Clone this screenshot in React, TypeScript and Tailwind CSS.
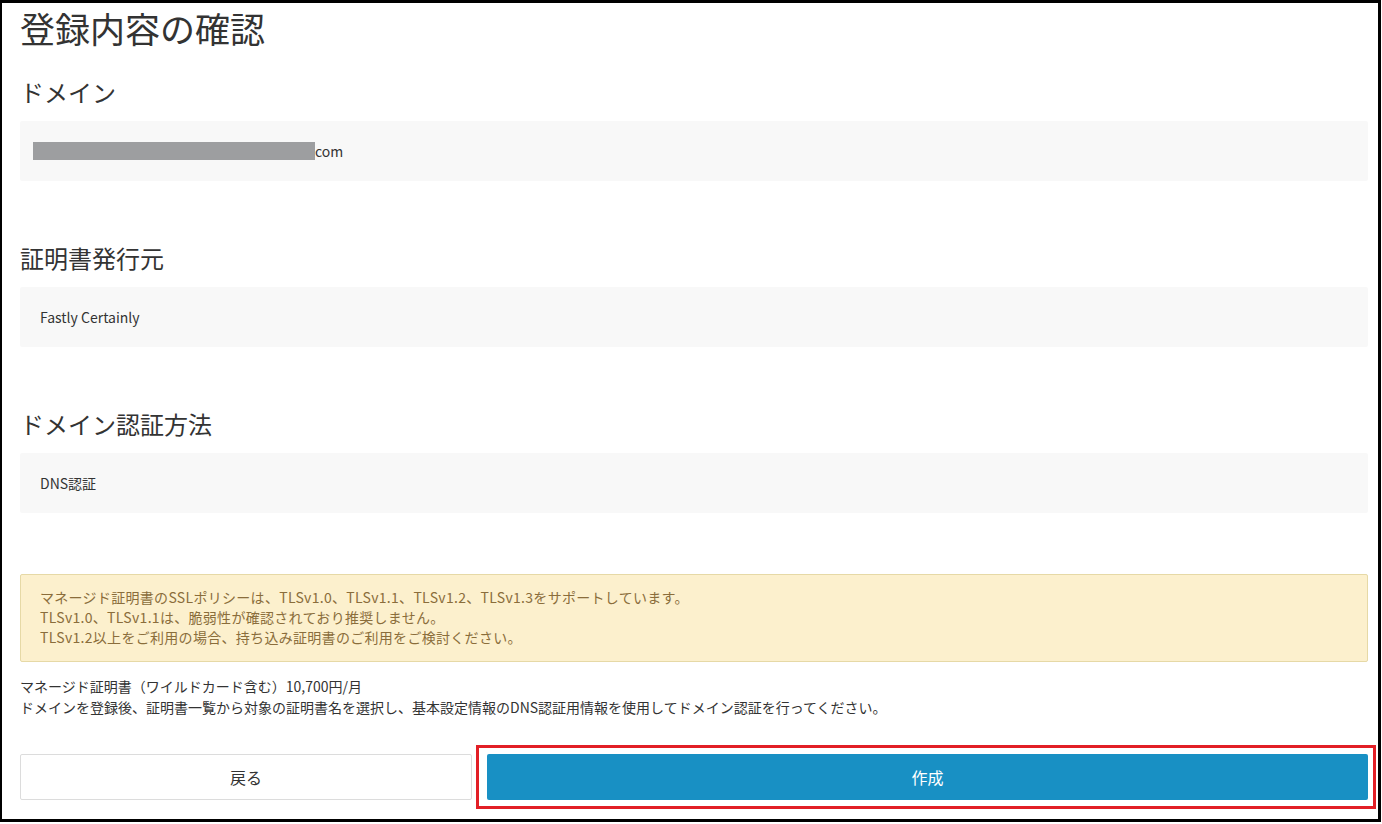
const font = { fontFamily: '"Noto Sans CJK JP", "Noto Sans", sans-serif' };

function Section({ title, children }: { title: string; children: React.ReactNode }) {
  return (
    <>
      <h2 className="text-[24px] leading-[36px] text-[#333]">{title}</h2>
      <div className="mt-[11px] flex h-[60px] items-center rounded-[2px] bg-[#f8f8f8] px-[20px] text-[14px] text-[#333]">
        {children}
      </div>
    </>
  );
}

export default function App() {
  return (
    <div className="h-[824px] w-[1382px] bg-white" style={font}>
      <div className="flex h-[822px] w-[1381px] flex-col border-b-[3px] border-l-2 border-r-[3px] border-t-[3px] border-black pl-[18px] pr-[10px]">
        <h1 className="h-[50px] text-[35px] leading-[50px] text-[#333]">登録内容の確認</h1>

        <div className="mt-[21px]">
          <Section title="ドメイン">
            <span className="-ml-[7px] inline-block h-[18px] w-[282px] bg-[#9d9ea0]" />
            <span>com</span>
          </Section>
        </div>

        <div className="mt-[59px]">
          <Section title="証明書発行元">Fastly Certainly</Section>
        </div>

        <div className="mt-[59px]">
          <Section title="ドメイン認証方法">DNS認証</Section>
        </div>

        <div className="mt-[61px] h-[88px] rounded-[2px] border border-[#e6d9a6] bg-[#fcf0cd] px-[19px] pt-[12px] text-[14px] leading-[20px] tracking-[0.3px] text-[#8a6d3b]">
          <p>マネージド証明書のSSLポリシーは、TLSv1.0、TLSv1.1、TLSv1.2、TLSv1.3をサポートしています。</p>
          <p>TLSv1.0、TLSv1.1は、脆弱性が確認されており推奨しません。</p>
          <p>TLSv1.2以上をご利用の場合、持ち込み証明書のご利用をご検討ください。</p>
        </div>

        <div className="mt-[14px] text-[14px] leading-[21px] text-[#333]">
          <p>マネージド証明書（ワイルドカード含む）10,700円/月</p>
          <p>ドメインを登録後、証明書一覧から対象の証明書名を選択し、基本設定情報のDNS認証用情報を使用してドメイン認証を行ってください。</p>
        </div>

        <div className="mt-[36px] flex h-[46px]">
          <button className="h-full w-[452px] rounded-[2px] border border-[#dcdcdc] bg-white text-[16px] text-[#333]">
            戻る
          </button>
          <div className="relative ml-[15px] flex-1">
            <button className="h-full w-full rounded-[2px] bg-[#1890c4] text-[16px] text-white">作成</button>
            <div className="pointer-events-none absolute -bottom-[9px] -left-[11px] -right-[8px] -top-[9px] border-[3px] border-[#e21f26]" />
          </div>
        </div>
      </div>
    </div>
  );
}
